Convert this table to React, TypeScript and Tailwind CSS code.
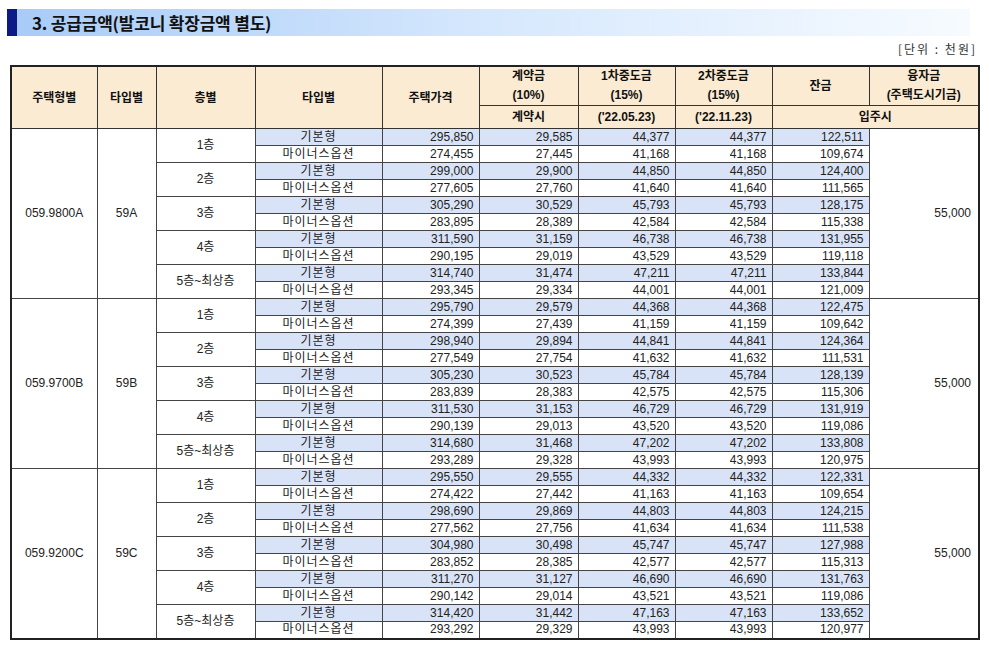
type Row = { price: string; deposit: string; mid1: string; mid2: string; balance: string };
type Floor = { label: string; base: Row; minus: Row };
type Group = { code: string; type: string; loan: string; floors: Floor[] };

const r = (price: string, deposit: string, mid1: string, mid2: string, balance: string): Row => ({
  price,
  deposit,
  mid1,
  mid2,
  balance,
});

const groups: Group[] = [
  {
    code: "059.9800A",
    type: "59A",
    loan: "55,000",
    floors: [
      { label: "1층", base: r("295,850", "29,585", "44,377", "44,377", "122,511"), minus: r("274,455", "27,445", "41,168", "41,168", "109,674") },
      { label: "2층", base: r("299,000", "29,900", "44,850", "44,850", "124,400"), minus: r("277,605", "27,760", "41,640", "41,640", "111,565") },
      { label: "3층", base: r("305,290", "30,529", "45,793", "45,793", "128,175"), minus: r("283,895", "28,389", "42,584", "42,584", "115,338") },
      { label: "4층", base: r("311,590", "31,159", "46,738", "46,738", "131,955"), minus: r("290,195", "29,019", "43,529", "43,529", "119,118") },
      { label: "5층~최상층", base: r("314,740", "31,474", "47,211", "47,211", "133,844"), minus: r("293,345", "29,334", "44,001", "44,001", "121,009") },
    ],
  },
  {
    code: "059.9700B",
    type: "59B",
    loan: "55,000",
    floors: [
      { label: "1층", base: r("295,790", "29,579", "44,368", "44,368", "122,475"), minus: r("274,399", "27,439", "41,159", "41,159", "109,642") },
      { label: "2층", base: r("298,940", "29,894", "44,841", "44,841", "124,364"), minus: r("277,549", "27,754", "41,632", "41,632", "111,531") },
      { label: "3층", base: r("305,230", "30,523", "45,784", "45,784", "128,139"), minus: r("283,839", "28,383", "42,575", "42,575", "115,306") },
      { label: "4층", base: r("311,530", "31,153", "46,729", "46,729", "131,919"), minus: r("290,139", "29,013", "43,520", "43,520", "119,086") },
      { label: "5층~최상층", base: r("314,680", "31,468", "47,202", "47,202", "133,808"), minus: r("293,289", "29,328", "43,993", "43,993", "120,975") },
    ],
  },
  {
    code: "059.9200C",
    type: "59C",
    loan: "55,000",
    floors: [
      { label: "1층", base: r("295,550", "29,555", "44,332", "44,332", "122,331"), minus: r("274,422", "27,442", "41,163", "41,163", "109,654") },
      { label: "2층", base: r("298,690", "29,869", "44,803", "44,803", "124,215"), minus: r("277,562", "27,756", "41,634", "41,634", "111,538") },
      { label: "3층", base: r("304,980", "30,498", "45,747", "45,747", "127,988"), minus: r("283,852", "28,385", "42,577", "42,577", "115,313") },
      { label: "4층", base: r("311,270", "31,127", "46,690", "46,690", "131,763"), minus: r("290,142", "29,014", "43,521", "43,521", "119,086") },
      { label: "5층~최상층", base: r("314,420", "31,442", "47,163", "47,163", "133,652"), minus: r("293,292", "29,329", "43,993", "43,993", "120,977") },
    ],
  },
];

const th = "border border-[#333] bg-[#fbebd3] font-bold text-[12px] text-[#111] text-center p-0";
const td = "border border-[#444] h-[17px] p-0 text-[12px] leading-[15px] text-[#222]";
const num = td + " text-right pr-[5px]";

function DataCells({ row, kind, blue }: { row: Row; kind: string; blue: boolean }) {
  const bg = blue ? "bg-[#d8e3f8]" : "bg-white";
  return (
    <>
      <td className={`${td} ${bg} text-center tracking-[1px]`}>{kind}</td>
      <td className={`${num} ${bg}`}>{row.price}</td>
      <td className={`${num} ${bg}`}>{row.deposit}</td>
      <td className={`${num} ${bg}`}>{row.mid1}</td>
      <td className={`${num} ${bg}`}>{row.mid2}</td>
      <td className={`${num} ${bg}`}>{row.balance}</td>
    </>
  );
}

export default function App() {
  return (
    <div className="w-[989px] h-[647px] bg-white overflow-hidden font-['Liberation_Sans','Noto_Sans_CJK_KR',sans-serif]">
      {/* 제목 */}
      <div className="pt-[9px] pl-[7px] pr-[19px]">
        <div className="flex h-[27px] items-center bg-gradient-to-r from-[#a7cbf7] via-[#d6e8fd] to-[#f7fbff]">
          <div className="w-[10px] h-full bg-[#0b1a86]" />
          <h1 className="ml-[15px] text-[17px] font-semibold text-[#111] font-['Noto_Sans_CJK_KR',sans-serif] tracking-[-0.2px]">
            3. 공급금액(발코니 확장금액 별도)
          </h1>
        </div>
      </div>

      <div className="flex justify-end pr-[12px] mt-[4px] h-[22px] text-[12px] text-[#333] tracking-[2px] font-['Noto_Sans_CJK_KR',sans-serif]">
        [단위 : 천원]
      </div>

      {/* 표 */}
      <div className="pl-[10px] mt-[3px]">
        <table className="table-fixed border-collapse border-2 border-[#222] w-[968px]">
          <colgroup>
            <col className="w-[86px]" />
            <col className="w-[59px]" />
            <col className="w-[99px]" />
            <col className="w-[127px]" />
            <col className="w-[97px]" />
            <col className="w-[99px]" />
            <col className="w-[97px]" />
            <col className="w-[97px]" />
            <col className="w-[97px]" />
            <col className="w-[110px]" />
          </colgroup>
          <thead>
            <tr className="h-[39px]">
              <th rowSpan={2} className={th}>주택형별</th>
              <th rowSpan={2} className={th}>타입별</th>
              <th rowSpan={2} className={th}>층별</th>
              <th rowSpan={2} className={th}>타입별</th>
              <th rowSpan={2} className={th}>주택가격</th>
              <th className={`${th} leading-[19px]`}>계약금<br />(10%)</th>
              <th className={`${th} leading-[19px]`}>1차중도금<br />(15%)</th>
              <th className={`${th} leading-[19px]`}>2차중도금<br />(15%)</th>
              <th className={th}>잔금</th>
              <th className={`${th} leading-[19px]`}>융자금<br />(주택도시기금)</th>
            </tr>
            <tr className="h-[23px]">
              <th className={th}>계약시</th>
              <th className={th}>('22.05.23)</th>
              <th className={th}>('22.11.23)</th>
              <th colSpan={2} className={th}>입주시</th>
            </tr>
          </thead>
          <tbody>
            {groups.map((g) =>
              g.floors.map((f, fi) => (
                <>
                  <tr key={`${g.code}-${fi}-a`}>
                    {fi === 0 && (
                      <>
                        <td rowSpan={10} className={`${td} text-center border-[#222]`}>{g.code}</td>
                        <td rowSpan={10} className={`${td} text-center border-[#222]`}>{g.type}</td>
                      </>
                    )}
                    <td rowSpan={2} className={`${td} text-center border-[#222]`}>{f.label}</td>
                    <DataCells row={f.base} kind="기본형" blue />
                    {fi === 0 && (
                      <td rowSpan={10} className={`${td} text-right pr-[7px] border-[#222]`}>{g.loan}</td>
                    )}
                  </tr>
                  <tr key={`${g.code}-${fi}-b`}>
                    <DataCells row={f.minus} kind="마이너스옵션" blue={false} />
                  </tr>
                </>
              ))
            )}
          </tbody>
        </table>
      </div>
    </div>
  );
}
